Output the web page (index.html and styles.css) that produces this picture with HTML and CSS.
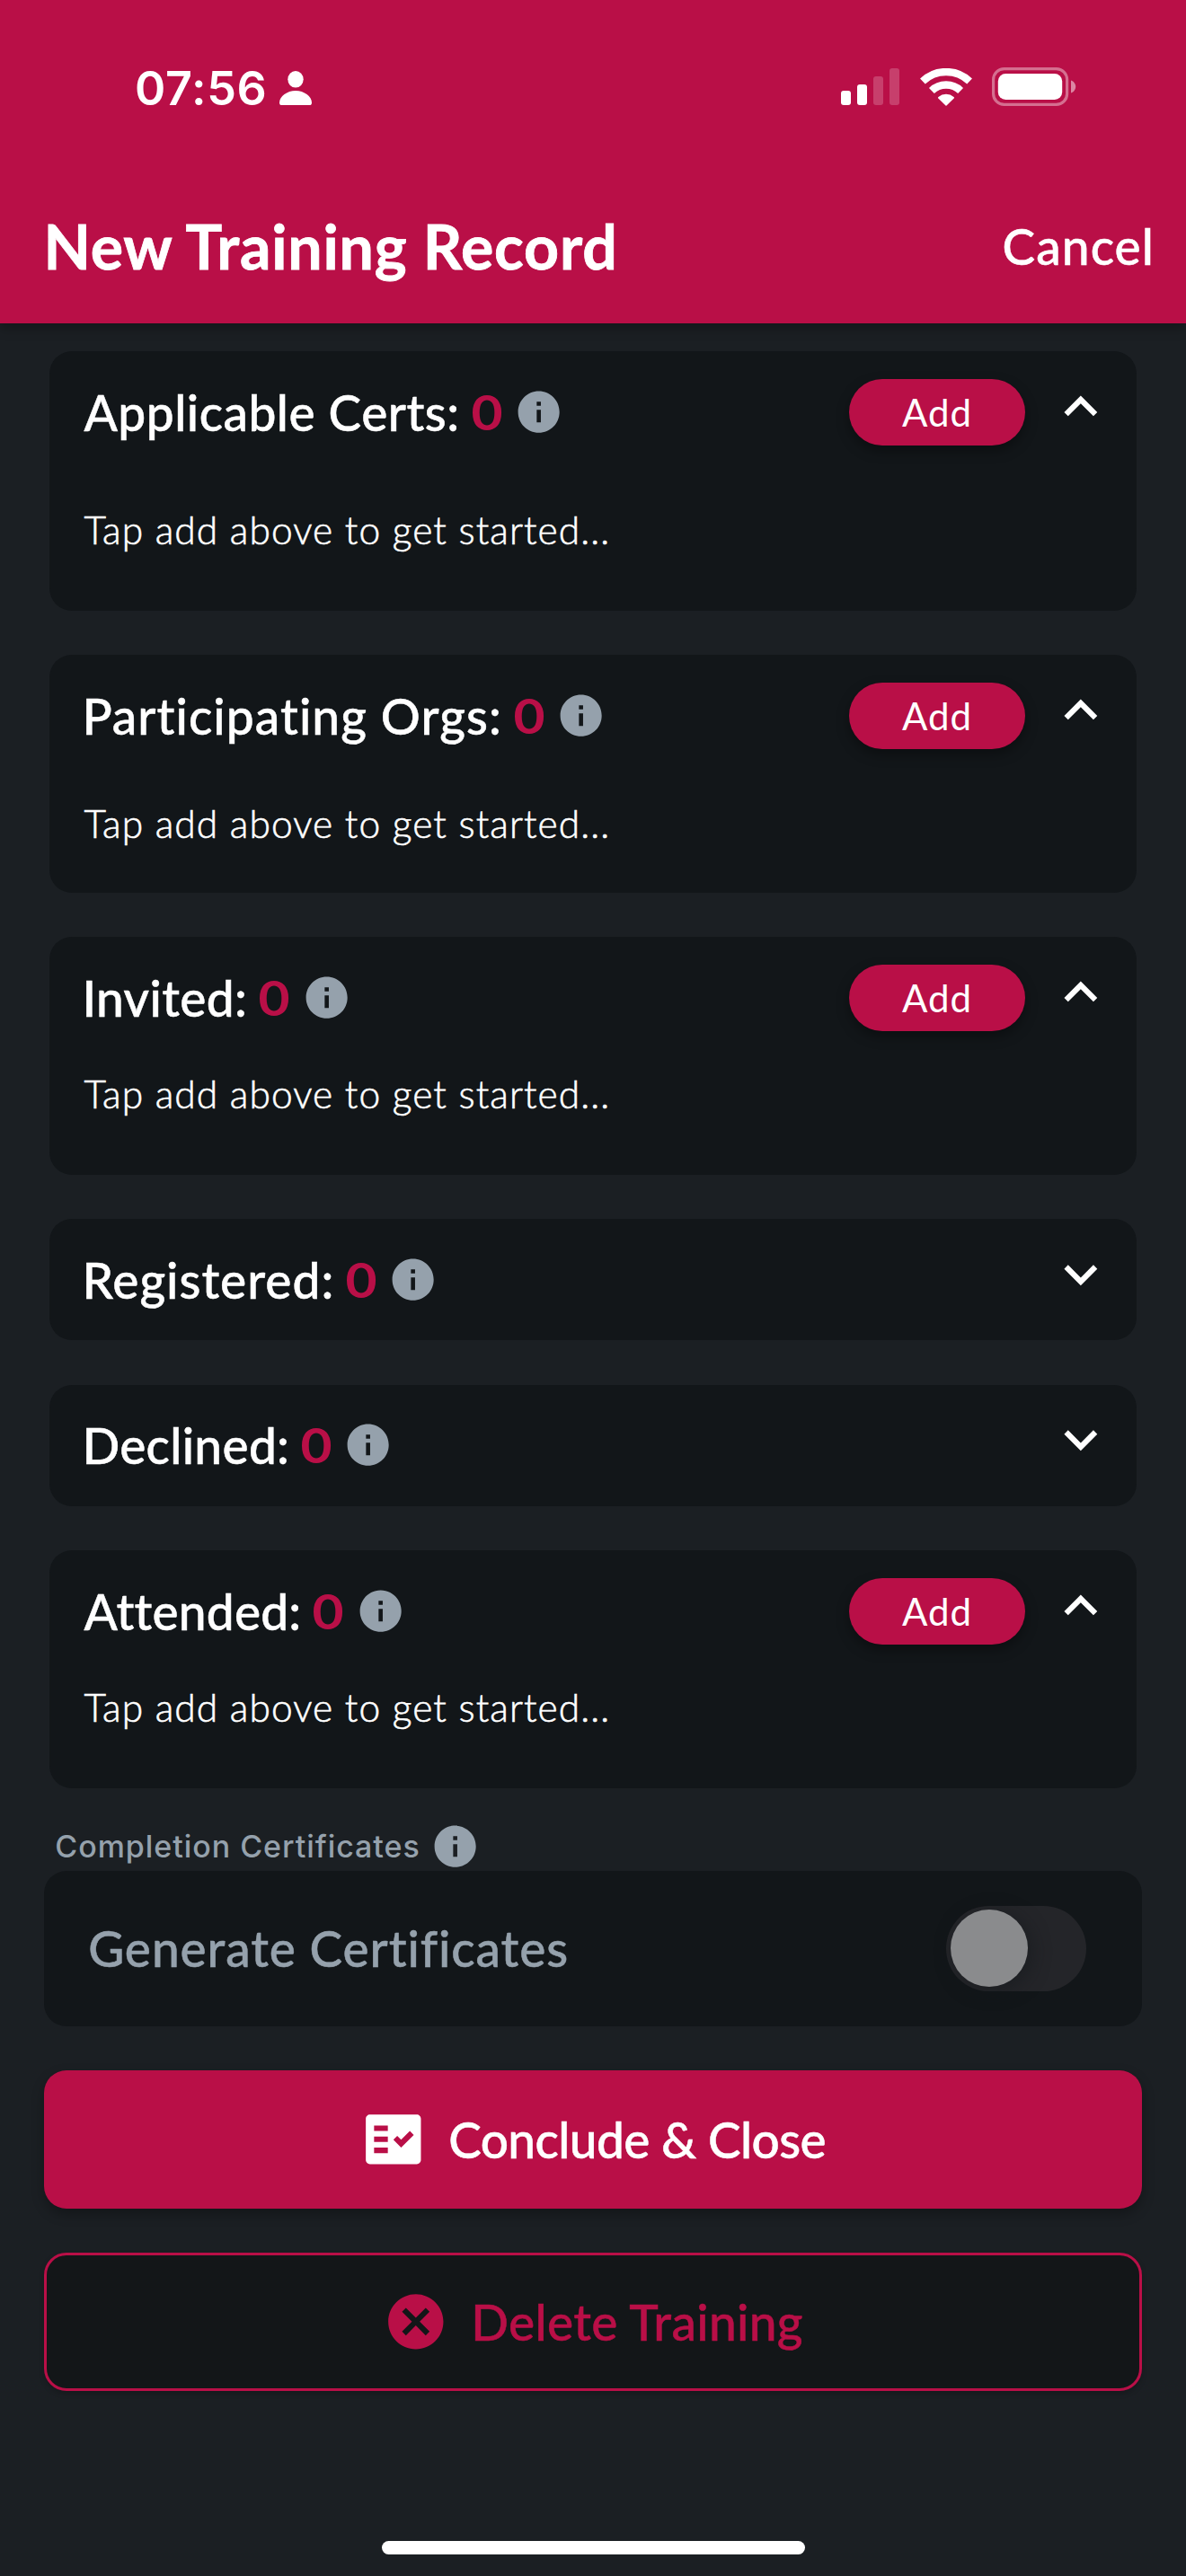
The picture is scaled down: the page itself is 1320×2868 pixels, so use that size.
FILE: index.html
```html
<!DOCTYPE html>
<html lang="en">
<head>
<meta charset="utf-8">
<title>New Training Record</title>
<link rel="stylesheet" href="styles.css">
</head>
<body>
<svg class="sprite" aria-hidden="true">
  <symbol id="info" viewBox="0 0 24 24"><path d="M12 2C6.48 2 2 6.48 2 12s4.48 10 10 10 10-4.48 10-10S17.52 2 12 2zm1 15h-2v-6h2v6zm0-8h-2V7h2v2z"/></symbol>
  <symbol id="up" viewBox="0 0 24 24"><path d="M12 8l-6 6 1.41 1.41L12 10.83l4.59 4.58L18 14z"/></symbol>
  <symbol id="down" viewBox="0 0 24 24"><path d="M16.59 8.59L12 13.17 7.41 8.59 6 10l6 6 6-6z"/></symbol>
</svg>

<header class="header">
  <div class="status">
    <span class="time">07:56</span>
    <svg class="person" viewBox="0 0 36 38"><ellipse cx="18" cy="9.3" rx="8.7" ry="9.3"/><path d="M18 22c9.5 0 18 6.5 18 13.2 0 2-.9 2.8-2.6 2.8H2.600C.9 38 0 37.2 0 35.2 0 28.5 8.5 22 18 22z"/></svg>
    <div class="indicators">
      <svg class="signal" viewBox="0 0 65 41"><rect x="0" y="25" width="11" height="16" rx="3"/><rect x="18" y="18" width="11" height="23" rx="3"/><g opacity=".2"><rect x="36" y="9" width="11" height="32" rx="3"/><rect x="54" y="0" width="11" height="41" rx="3"/></g></svg>
      <svg class="wifi" viewBox="0 0 58 42"><path d="M2.9 14.4A38 38 0 0 1 55.1 14.4" fill="none" stroke="#fff" stroke-width="8.3"/><path d="M12.9 25A23.4 23.4 0 0 1 45.1 25" fill="none" stroke="#fff" stroke-width="8.5"/><path d="M20.3 33.6q-.8-.9.1-1.6a13.3 13.3 0 0 1 17.2 0q.9.7.1 1.6L29.5 41.6q-.5.5-1 0z"/></svg>
      <svg class="battery" viewBox="0 0 94 43"><rect x="1.6" y="1.6" width="82" height="39.8" rx="12" fill="none" stroke="#fff" stroke-opacity=".4" stroke-width="3.2"/><rect x="6.8" y="7" width="71.4" height="29" rx="8.5"/><path d="M88 14.5c3 1 5.2 3.8 5.2 7s-2.2 6-5.2 7z" opacity=".5"/></svg>
    </div>
  </div>
  <div class="titlebar">
    <h1 class="page-title">New Training Record</h1>
    <a class="cancel">Cancel</a>
  </div>
</header>

<main class="main">
  <section class="card card-certs">
    <div class="card-head">
      <h2 class="name name-certs">Applicable Certs:</h2><span class="count">0</span><svg class="info"><use href="#info"/></svg>
      <button class="add">Add</button><svg class="chevron"><use href="#up"/></svg>
    </div>
    <p class="empty">Tap add above to get started...</p>
  </section>
  <section class="card card-orgs">
    <div class="card-head">
      <h2 class="name name-orgs">Participating Orgs:</h2><span class="count">0</span><svg class="info"><use href="#info"/></svg>
      <button class="add">Add</button><svg class="chevron"><use href="#up"/></svg>
    </div>
    <p class="empty">Tap add above to get started...</p>
  </section>
  <section class="card card-people">
    <div class="card-head">
      <h2 class="name name-invited">Invited:</h2><span class="count">0</span><svg class="info"><use href="#info"/></svg>
      <button class="add">Add</button><svg class="chevron"><use href="#up"/></svg>
    </div>
    <p class="empty">Tap add above to get started...</p>
  </section>
  <section class="card">
    <div class="card-head">
      <h2 class="name name-registered">Registered:</h2><span class="count">0</span><svg class="info"><use href="#info"/></svg>
      <svg class="chevron"><use href="#down"/></svg>
    </div>
  </section>
  <section class="card">
    <div class="card-head">
      <h2 class="name name-declined">Declined:</h2><span class="count">0</span><svg class="info"><use href="#info"/></svg>
      <svg class="chevron"><use href="#down"/></svg>
    </div>
  </section>
  <section class="card card-people">
    <div class="card-head">
      <h2 class="name name-attended">Attended:</h2><span class="count">0</span><svg class="info"><use href="#info"/></svg>
      <button class="add">Add</button><svg class="chevron"><use href="#up"/></svg>
    </div>
    <p class="empty">Tap add above to get started...</p>
  </section>

  <div class="label-row"><span class="label">Completion Certificates</span><svg class="info"><use href="#info"/></svg></div>
  <div class="toggle-card">
    <span class="toggle-text">Generate Certificates</span>
    <span class="switch"><span class="knob"></span></span>
  </div>

  <button class="action conclude">
    <svg class="action-icon" viewBox="0 0 24 24"><path d="M20.5 3h-17C2.7 3 2 3.7 2 4.5v15c0 .8.7 1.5 1.5 1.5h17c.8 0 1.5-.7 1.5-1.5v-15c0-.8-.7-1.5-1.5-1.5zM10 17H5v-2h5v2zm0-4H5v-2h5v2zm0-4H5V7h5v2zm4.82 6L12 12.16l1.41-1.41 1.41 1.42L17.99 9l1.42 1.42L14.82 15z"/></svg>
    <span>Conclude &amp; Close</span>
  </button>
  <button class="action delete">
    <svg class="action-icon" viewBox="0 0 24 24"><path d="M12 2C6.47 2 2 6.47 2 12s4.47 10 10 10 10-4.47 10-10S17.53 2 12 2zm5 13.59L15.59 17 12 13.41 8.41 17 7 15.59 10.59 12 7 8.41 8.41 7 12 10.59 15.59 7 17 8.41 13.41 12 17 15.59z"/></svg>
    <span>Delete Training</span>
  </button>
</main>
<div class="home-bar"></div>
</body>
</html>
```
FILE: styles.css
```css
:root {
  --primary: #b90f47;
  --background: #1b1f23;
  --surface: #121619;
  --muted: #95a1ac;
}

* { box-sizing: border-box; margin: 0; }

body {
  width: 1320px;
  height: 2868px;
  display: flex;
  flex-direction: column;
  overflow: hidden;
  background: var(--background);
  color: #fff;
  font: 500 55px/64px Lato, sans-serif;
}

svg { display: block; flex: none; fill: currentColor; }
button { border: 0; padding: 0; color: inherit; font: inherit; }
.sprite { position: absolute; width: 0; height: 0; }

/* Header */
.header {
  flex: none;
  height: 360px;
  background: var(--primary);
  box-shadow: 0 6px 12px rgba(0, 0, 0, .25);
}
.status {
  height: 187px;
  padding: 7px 122px 0 150px;
  display: flex;
  align-items: center;
}
.time {
  padding-top: 3px;
  font: 600 52px/64px Inter, sans-serif;
  letter-spacing: .7px;
}
.person { width: 36px; height: 38px; margin: 2px 0 0 13px; }
.indicators { margin: -1px 0 0 auto; display: flex; align-items: center; gap: 22.5px; }
.signal { width: 65px; height: 41px; }
.wifi { width: 58px; height: 42px; }
.battery { width: 94px; height: 43px; }
.titlebar {
  height: 173px;
  padding: 0 35px 0 48.5px;
  display: flex;
  align-items: center;
  justify-content: space-between;
}
.page-title {
  font-size: 68px;
  line-height: 80px;
  font-weight: 700;
  letter-spacing: .8px;
  -webkit-text-stroke: .8px currentColor;
}
.cancel { letter-spacing: 1.08px; }
.cancel, .name, .toggle-text, .action span { -webkit-text-stroke: .5px currentColor; }

/* Collapsible cards */
.main {
  flex: 1;
  padding: 31px 49px 0;
  display: flex;
  flex-direction: column;
}
.card {
  height: 135.2px;
  margin: 0 6.4px;
  padding: 0 25px 0 36px;
  border-radius: 25px;
  background: var(--surface);
}
.card + .card { margin-top: 49.3px; }
.card-certs { height: 289px; }
.card-orgs, .card-people { height: 264.6px; }
.card-head { height: 135px; display: flex; align-items: center; }
.name { font-size: 55px; font-weight: 500; white-space: nowrap; }
.name-certs { margin-left: 2px; letter-spacing: .5px; }
.name-orgs { letter-spacing: 1.05px; }
.name-invited { letter-spacing: .37px; }
.name-registered { letter-spacing: 1px; }
.name-declined { letter-spacing: .31px; }
.name-attended { margin-left: 2px; letter-spacing: .2px; }
.count {
  width: 36px;
  margin: 0 12.2px 0 12px;
  display: flex;
  justify-content: center;
  color: var(--primary);
  font-size: 54px;
  font-weight: 700;
  transform: scaleX(1.12);
}
.info { width: 55.3px; height: 55.3px; color: var(--muted); }
.add {
  width: 196.7px;
  height: 74px;
  margin: 0 0 0 auto;
  border-radius: 37px;
  background: var(--primary);
  box-shadow: 0 6px 14px rgba(0, 0, 0, .35);
  font-size: 42px;
  line-height: 74px;
  font-weight: 400;
  letter-spacing: 1px;
}
.chevron { width: 73.7px; height: 73.7px; margin: 0 0 12px auto; }
.add + .chevron { margin-left: 24.5px; }
.empty {
  padding-left: 2px;
  font-size: 42.5px;
  line-height: 54px;
  font-weight: 300;
  letter-spacing: 1.05px;
  -webkit-text-stroke: .6px currentColor;
}
.card-certs .empty { margin-top: 37px; }
.card-orgs .empty { margin-top: 25.5px; }
.card-people .empty { margin-top: 12.6px; }

/* Certificates switch */
.label-row {
  height: 92.6px;
  padding: 37.3px 0 0 12.3px;
  display: flex;
  align-items: center;
  gap: 11.3px;
  color: var(--muted);
}
.label { font: 500 34px/54px Inter, sans-serif; letter-spacing: .95px; }
.toggle-card {
  height: 172.4px;
  padding: 0 61.8px 0 49.2px;
  display: flex;
  align-items: center;
  justify-content: space-between;
  border-radius: 25px;
  background: var(--surface);
}
.toggle-text { color: var(--muted); letter-spacing: .89px; }
.switch {
  width: 156px;
  height: 95px;
  padding: 4.5px;
  border-radius: 48px;
  background: #242529;
}
.knob {
  display: block;
  width: 86px;
  height: 86px;
  border-radius: 50%;
  background: #8a8b8d;
  box-shadow: 4px 4px 20px rgba(18, 22, 25, .5);
}

/* Actions */
.action {
  height: 154px;
  margin-top: 49.3px;
  display: flex;
  align-items: center;
  justify-content: center;
  gap: 24.6px;
  border-radius: 25px;
  box-shadow: 0 6px 14px rgba(0, 0, 0, .3);
}
.action-icon { width: 73.6px; height: 73.6px; }
.conclude { background: var(--primary); letter-spacing: -.61px; }
.delete {
  border: 3px solid var(--primary);
  background: #131618;
  color: var(--primary);
  letter-spacing: .33px;
  box-shadow: 0 3px 6px rgba(0, 0, 0, .2);
}

.home-bar {
  flex: none;
  width: 471px;
  height: 15px;
  margin: 0 auto 24px;
  border-radius: 8px;
  background: #fff;
}
```
